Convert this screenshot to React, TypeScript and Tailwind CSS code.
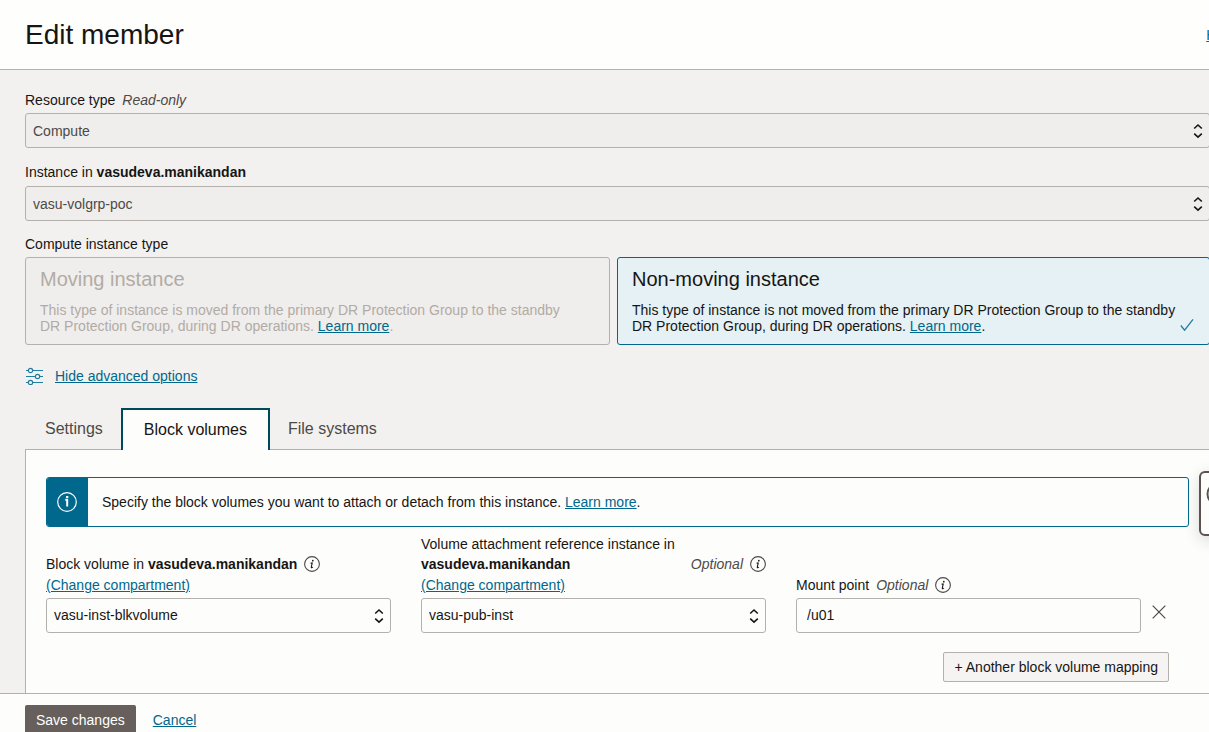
import { useState } from "react";
import type { ReactNode } from "react";

const COMPARTMENT = "vasudeva.manikandan";
const TABS = ["Settings", "Block volumes", "File systems"];

const linkClass = "text-[#00688c] underline underline-offset-1 decoration-1";

const SelectArrows = () => (
    <svg
        className="pointer-events-none absolute right-[7px] top-1/2 h-4 w-[10px] -translate-y-1/2"
        viewBox="0 0 10 16"
        fill="none"
        stroke="#161513"
        strokeWidth="1.6"
    >
        <path d="M1.2 5.5 5 2l3.8 3.5M1.2 10.7 5 14.2l3.8-3.5" />
    </svg>
);

const InfoIcon = () => (
    <svg className="h-4 w-4 shrink-0" viewBox="0 0 16 16" fill="none">
        <circle cx="8" cy="8" r="7.4" stroke="#4d4946" strokeWidth="1.1" />
        <circle cx="8.8" cy="4.7" r="0.85" fill="#161513" />
        <path d="M6.6 7.1h1.6L7.3 11q-.1.8.5.7.6-.1 1.1-.7" stroke="#161513" strokeWidth="1.1" />
    </svg>
);

const SlidersIcon = () => (
    <svg className="h-[18px] w-[18px]" viewBox="0 0 18 18" fill="none" stroke="#227e9e" strokeWidth="1.2">
        <path d="M1 3.5h2.3M7.7 3.5h10.3M1 9.5h9.3M14.7 9.5h3.3M1 15.5h2.3M7.7 15.5h10.3" />
        <circle cx="5.5" cy="3.5" r="2.2" />
        <circle cx="12.5" cy="9.5" r="2.2" />
        <circle cx="5.5" cy="15.5" r="2.2" />
    </svg>
);

type SelectProps = {
    id: string;
    value: string;
    disabled?: boolean;
};

const SelectBox = ({ id, value, disabled }: SelectProps) => (
    <div className="relative">
        <select
            id={id}
            disabled={disabled}
            defaultValue={value}
            className="block h-[35px] w-full appearance-none rounded-[3px] border border-[#b4b1ad] bg-[#fdfdfc] px-[7px] pb-0.5 text-[#161513] opacity-100 disabled:bg-[#efeeec] disabled:pb-0 disabled:text-[#4d4946]"
        >
            <option>{value}</option>
        </select>
        <SelectArrows />
    </div>
);

type InstanceCardProps = {
    title: string;
    disabled?: boolean;
    checked?: boolean;
    children: ReactNode;
};

const InstanceCard = ({ title, disabled, checked, children }: InstanceCardProps) => (
    <label
        className={`relative block rounded-[3px] border px-[14px] pt-[7px] pb-[10px] ${disabled
            ? "border-[#b4b1ad] bg-[#efeeec] text-[#b2aba5]"
            : "border-[#00688c] bg-[#e5f1f4] text-[#161513]"
            }`}
    >
        <input type="radio" name="instanceType" className="sr-only" disabled={disabled} defaultChecked={checked} />
        <span className="block text-xl leading-7">{title}</span>
        <span className="mt-[9px] block pr-4 leading-4">
            {children} <a href="#" className={linkClass}>Learn more</a>.
        </span>
        {checked && (
            <svg
                className="absolute right-[15px] bottom-3 h-[14px] w-[14px]"
                viewBox="0 0 14 14"
                fill="none"
                stroke="#227e9e"
                strokeWidth="1.3"
            >
                <path d="M.8 7.5 4.6 12.2 13 1.3" />
            </svg>
        )}
    </label>
);

const App = () => {
    const [activeTab, setActiveTab] = useState<string>("Block volumes");
    const [mountPoint, setMountPoint] = useState<string>("/u01");

    return (
        <div className="relative h-screen overflow-hidden bg-[#f3f1f0] font-['Liberation_Sans',Arial,sans-serif] text-sm leading-5 text-[#161513]">
            <header className="border-b border-[#b4b1ad] bg-[#fefefd]">
                <div className="-mr-[26px] flex h-[69px] items-center justify-between pl-[25px]">
                    <h1 className="text-[28px] leading-9">Edit member</h1>
                    <a href="#" className={linkClass}>Help</a>
                </div>
            </header>

            <main className="-mr-px pt-5 pl-[25px]">
                <div className="mb-[3px] flex gap-[7px]">
                    <label htmlFor="resourceType">Resource type</label>
                    <span className="text-[#4d4946] italic">Read-only</span>
                </div>
                <SelectBox id="resourceType" value="Compute" disabled />

                <label htmlFor="instance" className="mt-[14px] mb-1 block">
                    Instance in <b>{COMPARTMENT}</b>
                </label>
                <SelectBox id="instance" value="vasu-volgrp-poc" disabled />

                <p className="mt-[13px] mb-[3px]">Compute instance type</p>
                <div className="grid grid-cols-[585fr_593fr] gap-[7px]">
                    <InstanceCard title="Moving instance" disabled>
                        This type of instance is moved from the primary DR Protection Group to the standby DR Protection
                        Group, during DR operations.
                    </InstanceCard>
                    <InstanceCard title="Non-moving instance" checked>
                        This type of instance is not moved from the primary DR Protection Group to the standby DR
                        Protection Group, during DR operations.
                    </InstanceCard>
                </div>

                <div className="mt-[21px] flex items-center gap-3">
                    <SlidersIcon />
                    <a href="#" className={linkClass}>Hide advanced options</a>
                </div>

                <div role="tablist" className="mt-[22px] flex h-[41px] text-base">
                    {TABS.map((tab) => (
                        <button
                            key={tab}
                            role="tab"
                            aria-selected={activeTab === tab}
                            onClick={() => setActiveTab(tab)}
                            className={activeTab === tab
                                ? "z-10 -mb-px border-2 border-b-0 border-[#00485c] bg-[#fdfdfc] px-[21px] text-[#161513]"
                                : "px-[18px] text-[#4d4946] first:pl-5"
                                }
                        >
                            {tab}
                        </button>
                    ))}
                </div>

                <section className="border border-b-0 border-[#b4b1ad] bg-[#fdfdfc] px-5 pt-[27px] pb-[11px]">
                    <div className="flex items-stretch overflow-hidden rounded-[3px] border border-[#00688c]">
                        <div className="flex w-[41px] items-center justify-center bg-[#00688c] pr-px">
                            <svg className="h-5 w-5" viewBox="0 0 20 20" fill="none">
                                <circle cx="10" cy="10" r="9.3" stroke="#fff" strokeWidth="1.2" />
                                <path d="M8.3 7.8h1.9v6.7M9.1 5h2.2" stroke="#fff" strokeWidth="2" />
                            </svg>
                        </div>
                        <p className="py-[14px] pl-[14px]">
                            Specify the block volumes you want to attach or detach from this instance.{" "}
                            <a href="#" className={linkClass}>Learn more</a>.
                        </p>
                    </div>

                    <div className="mt-[7px] mr-5 flex items-end gap-[30px]">
                        <div className="flex-1">
                            <div className="flex items-center gap-[7px]">
                                <label htmlFor="blockVolume">
                                    Block volume in <b>{COMPARTMENT}</b>
                                </label>
                                <InfoIcon />
                            </div>
                            <a href="#" className={`mt-px mb-[3px] block w-fit ${linkClass}`}>(Change compartment)</a>
                            <SelectBox id="blockVolume" value="vasu-inst-blkvolume" />
                        </div>

                        <div className="flex-1">
                            <div className="flex items-end gap-[7px]">
                                <label htmlFor="referenceInstance" className="flex-1">
                                    Volume attachment reference instance in <b>{COMPARTMENT}</b>
                                </label>
                                <span className="text-[#4d4946] italic">Optional</span>
                                <span className="flex h-5 items-center">
                                    <InfoIcon />
                                </span>
                            </div>
                            <a href="#" className={`mt-px mb-[3px] block w-fit ${linkClass}`}>(Change compartment)</a>
                            <SelectBox id="referenceInstance" value="vasu-pub-inst" />
                        </div>

                        <div className="-mr-[30px] flex-1">
                            <div className="mb-[3px] flex items-center gap-[7px]">
                                <label htmlFor="mountPoint">Mount point</label>
                                <span className="text-[#4d4946] italic">Optional</span>
                                <InfoIcon />
                            </div>
                            <input
                                id="mountPoint"
                                type="text"
                                value={mountPoint}
                                onChange={(e) => setMountPoint(e.target.value)}
                                className="block h-[35px] w-full rounded-[3px] border border-[#b4b1ad] bg-[#fdfdfc] px-[10px] pb-0.5"
                            />
                        </div>

                        <button aria-label="Remove mapping" className="flex h-7 w-7 items-start justify-center pl-2">
                            <svg className="h-[14px] w-[14px]" viewBox="0 0 14 14" stroke="#4d4946" strokeWidth="1.2">
                                <path d="M.7.7l12.6 12.6M13.3.7.7 13.3" />
                            </svg>
                        </button>
                    </div>

                    <div className="mt-[19px] mr-5 flex justify-end">
                        <button className="h-[30px] rounded-[2px] border border-[#b4b1ad] bg-[#f6f4f3] px-[10px]">
                            + Another block volume mapping
                        </button>
                    </div>
                </section>
            </main>

            <footer className="flex items-center gap-[17px] border-t border-[#b4b1ad] bg-[#fdfdfc] py-[11px] pl-[25px]">
                <button className="h-[30px] rounded-[2px] bg-[#665f5b] px-[11px] text-white">Save changes</button>
                <a href="#" className={linkClass}>Cancel</a>
            </footer>

            {/* floating support launcher, docked to the window edge */}
            <button
                aria-label="Support"
                className="absolute top-[471px] -right-9 z-20 h-[65px] w-[46px] rounded-md border-2 border-[#5b5350] bg-[#fdfdfc] pl-[5px] shadow-[0_4px_16px_rgba(0,0,0,0.14)]"
            >
                <svg className="-mt-5 h-6 w-6" viewBox="0 0 24 24" fill="none" stroke="#5b5350" strokeWidth="2">
                    <circle cx="12" cy="12" r="10.5" />
                </svg>
            </button>
        </div>
    );
};

export default App;
